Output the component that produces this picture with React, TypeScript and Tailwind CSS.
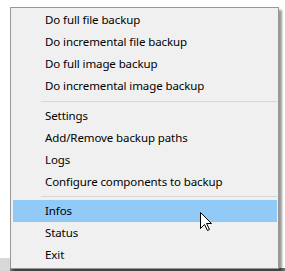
const groups = [
  ["Do full file backup", "Do incremental file backup", "Do full image backup", "Do incremental image backup"],
  ["Settings", "Add/Remove backup paths", "Logs", "Configure components to backup"],
  ["Infos", "Status", "Exit"],
];

function Item({ label, active }: { label: string; active?: boolean }) {
  return (
    <div
      className={
        "h-[22px] flex items-center ml-[2px] mr-px pl-[32px] text-[11.5px] tracking-[-0.1px] text-black " +
        (active ? "bg-[#91c9f7]" : "")
      }
    >
      {label}
    </div>
  );
}

function Separator({ h }: { h: string }) {
  return (
    <div className={"flex items-center pl-[30px] mr-px " + h}>
      <div className="h-px w-full bg-[#d7d7d7]" />
    </div>
  );
}

export default function App() {
  return (
    <div
      className="w-[285px] h-[271px] bg-white relative overflow-hidden"
      style={{ fontFamily: '"Noto Sans", "Open Sans", sans-serif' }}
    >
      {/* taskbar scraps peeking out below the menu */}
      <div className="absolute left-0 bottom-0 w-full h-[3px] bg-[#6b6b6b]" />
      <div className="absolute left-0 top-[258px] w-[10px] h-[13px] bg-[#d8d8d8]" />

      <div className="relative ml-[10px] mt-[7px] w-[269px] h-[262px] bg-[#f0f0f0] border border-[#979797] shadow-[3px_3px_2px_rgba(0,0,0,0.4)] pt-[1px]">
        {groups[0].map((l) => (
          <Item key={l} label={l} />
        ))}
        <Separator h="h-[8px]" />
        {groups[1].map((l) => (
          <Item key={l} label={l} />
        ))}
        <Separator h="h-[7px]" />
        {groups[2].map((l) => (
          <Item key={l} label={l} active={l === "Infos"} />
        ))}
      </div>

      {/* mouse pointer */}
      <svg className="absolute left-[200px] top-[212px]" width="13" height="20" viewBox="0 0 13 20">
        <path
          d="M0.5 0.5 L0.5 16.5 L4.5 12.5 L7.5 18.5 L9.5 17.5 L6.5 11.5 L11.5 11.5 Z"
          fill="#fff"
          stroke="#000"
          strokeWidth="1"
          strokeLinejoin="miter"
        />
      </svg>
    </div>
  );
}
